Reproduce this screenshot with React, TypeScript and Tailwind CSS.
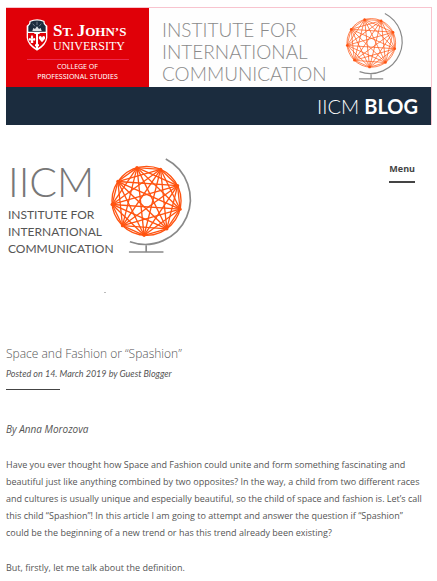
const NODE_ANGLES = [94, 134, 174, 214, 254, 294, 334, 14, 54];

const nodes = NODE_ANGLES.map((deg) => {
  const a = (deg * Math.PI) / 180;
  return { x: 437 + 104 * Math.cos(a), y: 167 + 104 * Math.sin(a) };
});

function Globe({ className, line }: { className: string; line: number }) {
  return (
    <svg viewBox="325 35 260 295" className={className} aria-hidden="true" fill="none">
      <g stroke="#ff5310" strokeWidth={line}>
        <circle cx="437" cy="167" r="104" />
        {nodes.map((a, i) =>
          nodes.slice(i + 1).map((b, j) => <line key={`${i}-${j}`} x1={a.x} y1={a.y} x2={b.x} y2={b.y} />),
        )}
      </g>
      {nodes.map((n, i) => (
        <circle key={i} cx={n.x} cy={n.y} r="5" fill="#ff5310" />
      ))}
      <g stroke="#898989" strokeWidth="5">
        <path d="M495 41A136 136 0 0 1 387 290" />
        <path d="M436 301V321M384 321H488" />
      </g>
    </svg>
  );
}

function Crest() {
  return (
    <svg viewBox="0 0 66 96" className="h-8 w-[22px] shrink-0" aria-hidden="true">
      <path d="M2 20Q12 16 10 6Q34-4 56 6Q54 16 64 20V56Q62 78 33 95Q4 78 2 56Z" fill="#fff" />
      <path d="M7 22Q15 16 14 8Q33 1 52 8Q51 16 59 22V38H7Z" fill="#1b2c3e" />
      <path d="M19 36L22 27L27 30L33 22L39 30L44 27L47 36Z" fill="#dce2e6" />
      <path d="M20 14L27 22M33 8V18M46 14L39 22" stroke="#9aa5af" strokeWidth="2" />
      <path d="M6 42H30V87Q8 74 6 57ZM36 42H60V57Q58 74 36 87Z" fill="#e00008" />
      <path d="M18 47Q24 54 20 59Q29 54 28 63Q25 67 21 64L22 72H14L15 64Q11 67 8 63Q8 54 16 59Q12 54 18 47Z" fill="#fff" />
      <path d="M48 70L39 59Q37 51 43 51Q47 51 48 56Q49 51 53 51Q59 52 57 59Z" fill="#fff" />
      <path d="M25 39H41V45H25ZM27 76H39V82H27Z" fill="#fff" />
    </svg>
  );
}

export default function App() {
  return (
    <div className="min-h-screen bg-white pt-[7px] pr-[5px] pb-2 pl-[6px] font-['Open_Sans','Lato',sans-serif] text-[#555]">
      <header>
        <div className="border-t border-r border-[#f8c4cf]">
          <div className="flex h-[79px]">
            <div className="w-[143px] shrink-0 bg-[#e00008] pt-[11px] text-white">
              <div className="flex items-start gap-[5px] pl-5">
                <Crest />
                <div className="pt-1 font-['Liberation_Serif',serif] whitespace-nowrap">
                  <div className="text-[13px] leading-[16px] font-bold">
                    <span className="text-[17px]">S</span>T. <span className="text-[17px]">J</span>OHN’S
                  </div>
                  <div className="text-[12px] leading-[12px]">UNIVERSITY</div>
                </div>
              </div>
              <div className="mx-auto mt-[7px] w-[102px] border-t border-[#ee2a50] pt-[2px] text-center font-['Noto_Sans',sans-serif] text-[7px] leading-[10px] whitespace-nowrap">
                COLLEGE OF
                <br />
                PROFESSIONAL STUDIES
              </div>
            </div>
            <div className="flex flex-1 justify-between bg-[#fefefe] pr-[25px] pl-[13px]">
              <p className="pt-[11px] font-['Lato',sans-serif] text-[19px] leading-[22px] font-light whitespace-nowrap text-[#8a8a8a]">
                INSTITUTE FOR
                <br />
                INTERNATIONAL
                <br />
                COMMUNICATION
              </p>
              <Globe className="mt-1 h-[69px] w-[61px] shrink-0" line={3} />
            </div>
          </div>
          <div className="flex h-[38px] items-center justify-end bg-[#1b2c3e] pr-[13px] font-['Lato',sans-serif] text-[20px] text-white">
            <p>
              <span className="font-light">IICM</span> <span className="font-bold">BLOG</span>
            </p>
          </div>
        </div>
        <div className="flex items-start justify-between pt-8 pr-[17px]">
          <a href="#home" aria-label="IICM Institute for International Communication" className="block">
            <span className="flex">
              <span className="block w-[103px] pl-[2px] font-['Lato',sans-serif] whitespace-nowrap">
                <span className="block text-[41px] leading-[49px] font-light text-[#777]">IICM</span>
                <span className="block text-[12px] leading-[17px] text-[#555]">
                  INSTITUTE FOR
                  <br />
                  INTERNATIONAL
                  <br />
                  COMMUNICATION
                </span>
              </span>
              <Globe className="h-[98px] w-[87px] shrink-0" line={4} />
            </span>
            <span className="mt-[35px] ml-[98px] block h-px w-[2px] bg-[#bbb]" />
          </a>
          <button type="button" className="mt-1 border-b-2 border-[#444] pb-1 text-[9px] leading-[16px] font-bold text-[#444]">
            Menu
          </button>
        </div>
      </header>
      <main className="pt-[52px]">
        <h1 className="text-[12px] leading-[18px] font-light">Space and Fashion or “Spashion”</h1>
        <p className="mt-[3px] font-['Lato',sans-serif] text-[9px] leading-[16px] italic">
          Posted on 14. March 2019 by Guest Blogger
        </p>
        <hr className="mt-[7px] w-[54px] border-[#444]" />
        <article className="pt-[31px] pr-2 text-[9px] leading-[17px]">
          <p className="mb-[18px] text-[10px] italic">By Anna Morozova</p>
          <p className="mb-[18px]">
            Have you ever thought how Space and Fashion could unite and form something fascinating and beautiful just like
            anything combined by two opposites? In the way, a child from two different races and cultures is usually unique
            and especially beautiful, so the child of space and fashion is. Let’s call this child “Spashion”! In this article
            I am going to attempt and answer the question if “Spashion” could be the beginning of a new trend or has this
            trend already been existing?
          </p>
          <p>But, firstly, let me talk about the definition.</p>
        </article>
      </main>
    </div>
  );
}
